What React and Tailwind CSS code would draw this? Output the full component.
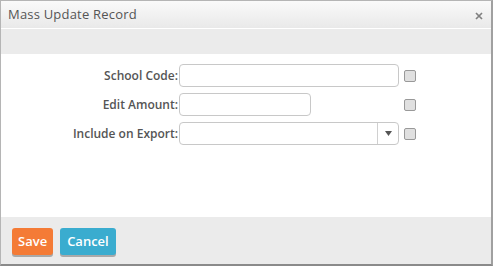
import React from "react";

function Row({ label, children }) {
  return (
    <div className="flex items-center h-[23px]">
      <div className="w-[178px] text-right pr-[1px] text-[12px] font-semibold text-[#555]">{label}</div>
      <div className="w-[220px] flex">{children}</div>
      <div className="ml-[5px] w-[12px] h-[12px] rounded-[2px] border border-[#999] bg-[#e0e0e0]"></div>
    </div>
  );
}

export default function App() {
  return (
    <div
      className="w-[493px] h-[266px] flex flex-col bg-white border-l border-t border-[#b5b5b5] border-r-2 border-b-2 border-r-[#a0a0a0] border-b-[#8a8a8a]"
      style={{ fontFamily: '"Open Sans", "Liberation Sans", sans-serif' }}
    >
      <div className="h-[28px] shrink-0 flex items-center justify-between pl-[7px] pr-[8px] bg-gradient-to-b from-[#fafafa] to-[#e9e9e9] border-b border-white">
        <span className="text-[13px] text-[#555] tracking-[0.2px]">Mass Update Record</span>
        <svg width="8" height="8" viewBox="0 0 8 8" className="mt-[2px]">
          <path d="M1 1L7 7M7 1L1 7" stroke="#808080" strokeWidth="1.7" />
        </svg>
      </div>
      <div className="h-[25px] shrink-0 bg-[#ebebeb]"></div>
      <div className="flex-1 bg-white pt-[10px] flex flex-col gap-[6px]">
        <Row label="School Code:">
          <div className="w-[220px] h-[23px] border border-[#c8c8c8] rounded-[4px] bg-white"></div>
        </Row>
        <Row label="Edit Amount:">
          <div className="w-[132px] h-[23px] border border-[#c8c8c8] rounded-[4px] bg-white"></div>
        </Row>
        <Row label="Include on Export:">
          <div className="w-[220px] h-[23px] border border-[#c8c8c8] rounded-[4px] bg-white flex">
            <div className="flex-1"></div>
            <div className="w-[21px] border-l border-[#d0d0d0] flex items-center justify-center">
              <svg width="7" height="5" viewBox="0 0 7 5"><path d="M0 0h7L3.5 5z" fill="#555" /></svg>
            </div>
          </div>
        </Row>
      </div>
      <div className="h-[47px] shrink-0 bg-[#ebebeb] flex items-start pt-[11px] pl-[11px] gap-[7px]">
        <button className="h-[27px] px-[6px] rounded-[3px] bg-[#f47b36] text-white text-[13px] font-semibold shadow-[0_2px_0_#a9a9a9]">Save</button>
        <button className="h-[27px] px-[7px] rounded-[3px] bg-[#3aaccf] text-white text-[13px] font-semibold shadow-[0_2px_0_#a9a9a9]">Cancel</button>
      </div>
    </div>
  );
}
